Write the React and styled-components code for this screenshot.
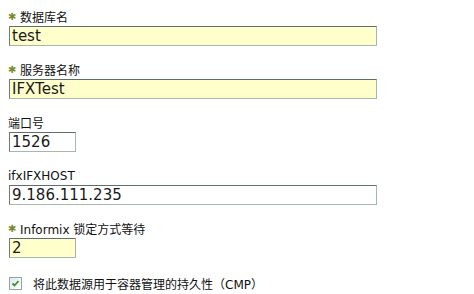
import React from "react";
import styled, { createGlobalStyle } from "styled-components";

const Global = createGlobalStyle`
  html, body { margin: 0; padding: 0; background: #ffffff; }
  body { font-family: "DejaVu Sans", "Noto Sans CJK SC", sans-serif; }
`;

const Form = styled.div`
  display: flex;
  flex-direction: column;
  padding: 9px 0 0 8px;
  width: 474px;
  height: 294px;
  box-sizing: border-box;
`;

const Field = styled.div`
  display: flex;
  flex-direction: column;
  align-items: flex-start;
  gap: 2px;
  margin-bottom: 16px;
`;

const Label = styled.label`
  display: flex;
  align-items: center;
  height: 15px;
  font-size: 12px;
  color: #111;
  font-family: "DejaVu Sans", "Noto Sans CJK SC", sans-serif;
  white-space: nowrap;
`;

const Star = styled.span`
  color: #7c8a2c;
  font-size: 10px;
  font-weight: bold;
  width: 12px;
  display: inline-block;
  line-height: 1;
`;

const Input = styled.input`
  margin: 0 0 0 1px;
  box-sizing: border-box;
  width: ${(p) => (p.$short ? "67px" : "368px")};
  height: 20px;
  padding: 0 0 0 2px;
  font-family: "DejaVu Sans", sans-serif;
  font-size: 15px;
  color: #1a1a1a;
  background: ${(p) => (p.$required ? "#ffffcc" : "#ffffff")};
  border-style: solid;
  border-width: 1px;
  border-color: #5d6e6e #a3b8ae #a3b8ae #6c7d7d;
  outline: none;
`;

const CheckRow = styled.label`
  display: flex;
  align-items: center;
  gap: 11px;
  height: 15px;
  margin-top: 2px;
  padding-left: 1px;
  font-size: 12px;
  color: #111;
  white-space: nowrap;
`;

const Box = styled.span`
  width: 11px;
  height: 11px;
  border: 1px solid #8fa3b0;
  background: linear-gradient(135deg, #e4e8ea 0%, #ffffff 100%);
  display: flex;
  align-items: center;
  justify-content: center;
`;

const fields = [
  { label: "数据库名", value: "test", required: true },
  { label: "服务器名称", value: "IFXTest", required: true },
  { label: "端口号", value: "1526", short: true },
  { label: "ifxIFXHOST", value: "9.186.111.235" },
  { label: "Informix 锁定方式等待", value: "2", required: true, short: true },
];

export default function App() {
  return (
    <>
      <Global />
      <Form>
        {fields.map((f) => (
          <Field key={f.label}>
            <Label>
              {f.required && <Star>✱</Star>}
              {f.label}
            </Label>
            <Input
              defaultValue={f.value}
              $required={f.required}
              $short={f.short}
            />
          </Field>
        ))}
        <CheckRow>
          <Box>
            <svg width="9" height="9" viewBox="0 0 9 9">
              <path
                d="M1.5 4.5 L3.5 6.5 L7.5 2"
                fill="none"
                stroke="#2a9a2a"
                strokeWidth="1.8"
              />
            </svg>
          </Box>
          将此数据源用于容器管理的持久性（CMP）
        </CheckRow>
      </Form>
    </>
  );
}
